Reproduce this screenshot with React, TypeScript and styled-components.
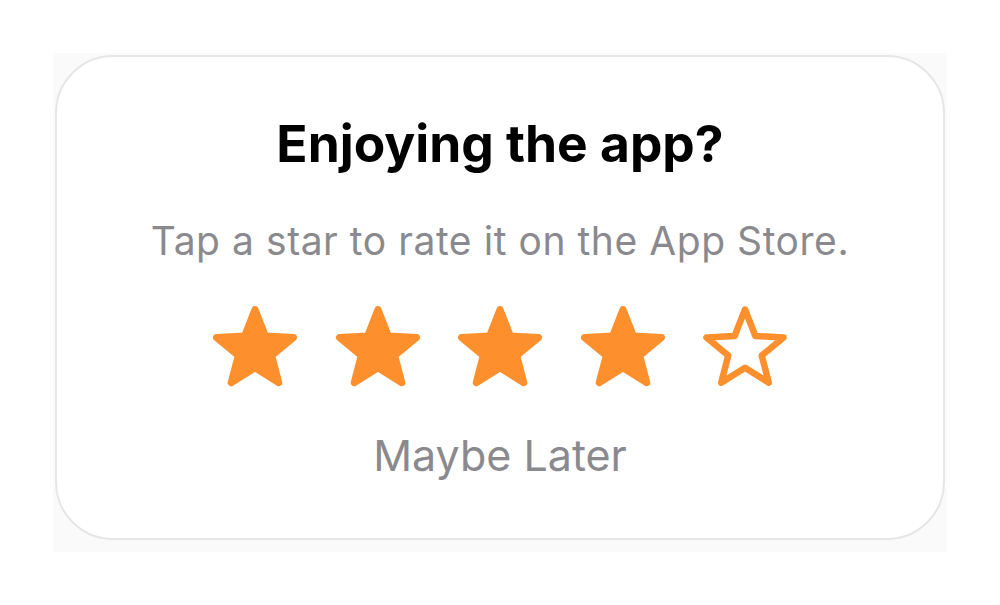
import React, { useState } from "react";
import styled, { createGlobalStyle } from "styled-components";

const GlobalStyle = createGlobalStyle`
  html, body {
    margin: 0;
    padding: 0;
    background: #ffffff;
  }
  body {
    font-family: Inter, "Noto Sans", "Liberation Sans", sans-serif;
    -webkit-font-smoothing: antialiased;
  }
`;

const ORANGE = "#FD8F2C";
const GRAY = "#8A8A8E";

const STAR_POINTS =
  "45,5.5 55.35,32 83.5,33.5 61.74,51.6 68.8,78.7 45,63.8 21.2,78.7 28.26,51.6 6.5,33.5 34.65,32";

function Star({ filled }: { filled: boolean }) {
  return (
    <svg width="90" height="86" viewBox="0 0 90 86" aria-hidden="true">
      <polygon
        points={STAR_POINTS}
        fill={filled ? ORANGE : "none"}
        stroke={ORANGE}
        strokeWidth={filled ? 7 : 6.5}
        strokeLinejoin="round"
      />
    </svg>
  );
}

export default function App() {
  const [rating, setRating] = useState(4);

  return (
    <>
      <GlobalStyle />
      <Page>
        <Backdrop>
          <Card>
            <Title>Enjoying the app?</Title>
            <Subtitle>Tap a star to rate it on the App Store.</Subtitle>
            <StarRow>
              {[1, 2, 3, 4, 5].map((n) => (
                <StarButton
                  key={n}
                  aria-label={`${n} star${n > 1 ? "s" : ""}`}
                  onClick={() => setRating(n)}
                >
                  <Star filled={n <= rating} />
                </StarButton>
              ))}
            </StarRow>
            <LaterButton>Maybe Later</LaterButton>
          </Card>
        </Backdrop>
      </Page>
    </>
  );
}

const Page = styled.div`
  padding: 53px;
`;

const Backdrop = styled.div`
  width: 894px;
  padding: 2px 2px 12px 2px;
  box-sizing: border-box;
  background: #fafafa;
`;

const Card = styled.div`
  width: 890px;
  height: 485px;
  box-sizing: border-box;
  border: 2px solid #e6e6e6;
  border-radius: 58px;
  background: #ffffff;
  display: flex;
  flex-direction: column;
  align-items: center;
  padding-top: 61px;
`;

const Title = styled.h1`
  margin: 0;
  font-size: 51.5px;
  line-height: 1;
  font-weight: 700;
  color: #000000;
`;

const Subtitle = styled.p`
  margin: 51px 0 0;
  font-size: 39px;
  line-height: 1;
  font-weight: 400;
  letter-spacing: 0.55px;
  color: ${GRAY};
`;

const StarRow = styled.div`
  display: flex;
  gap: 32.5px;
  margin-top: 44px;
`;

const StarButton = styled.button`
  border: none;
  background: none;
  padding: 0;
  display: flex;
  cursor: pointer;
`;

const LaterButton = styled.button`
  margin-top: 44px;
  border: none;
  background: none;
  padding: 0;
  font-family: inherit;
  font-size: 43px;
  line-height: 1;
  color: ${GRAY};
  cursor: pointer;
`;
